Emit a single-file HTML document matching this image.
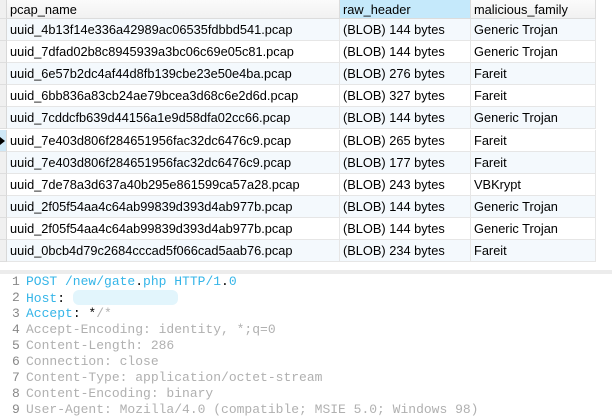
<!DOCTYPE html>
<html><head><style>
body{margin:0;width:612px;height:416px;background:#fff;overflow:hidden;position:relative;font-family:"Liberation Sans","Noto Sans CJK SC",sans-serif;font-size:12.8px;color:#000}
.c{position:absolute;box-sizing:border-box;padding-left:3px;line-height:22px;white-space:nowrap;border-right:1px solid #e6e6e6;border-bottom:1px solid #e6e6e6}
.h{line-height:19px;background:linear-gradient(#fbfbfb,#f1f1f1);border-color:#dcdcdc}
.g{position:absolute;left:0;width:7px;box-sizing:border-box;background:#f0f0f0;border-right:1px solid #d8d8d8;border-bottom:1px solid #dedede}
.code{position:absolute;left:0;top:274px;width:612px;font-family:"Liberation Mono",monospace;font-size:13px;color:#b0b0b0}
.ln{position:absolute;left:12px;color:#888;font-size:13px}
.l{position:absolute;left:26px;white-space:pre}
.b{color:#35b5e8}
</style></head><body>
<div id="t"></div>
<div style="position:absolute;top:270px;left:0;width:612px;height:4px;background:#ececec"></div>
<div class="code" id="code"></div>
<script>
var rows=[["uuid_4b13f14e336a42989ac06535fdbbd541.pcap","144","Generic Trojan"],["uuid_7dfad02b8c8945939a3bc06c69e05c81.pcap","144","Generic Trojan"],["uuid_6e57b2dc4af44d8fb139cbe23e50e4ba.pcap","276","Fareit"],["uuid_6bb836a83cb24ae79bcea3d68c6e2d6d.pcap","327","Fareit"],["uuid_7cddcfb639d44156a1e9d58dfa02cc66.pcap","144","Generic Trojan"],["uuid_7e403d806f284651956fac32dc6476c9.pcap","265","Fareit"],["uuid_7e403d806f284651956fac32dc6476c9.pcap","177","Fareit"],["uuid_7de78a3d637a40b295e861599ca57a28.pcap","243","VBKrypt"],["uuid_2f05f54aa4c64ab99839d393d4ab977b.pcap","144","Generic Trojan"],["uuid_2f05f54aa4c64ab99839d393d4ab977b.pcap","144","Generic Trojan"],["uuid_0bcb4d79c2684cccad5f066cad5aab76.pcap","234","Fareit"]];
var h='<div class="g" style="top:0;height:19px"></div>';
h+='<div class="c h" style="top:0;left:7px;width:333px;height:19px">pcap_name</div>';
h+='<div class="c h" style="top:0;left:340px;width:131px;height:19px;background:#c5e9fb">raw_header</div>';
h+='<div class="c h" style="top:0;left:471px;width:125px;height:19px">malicious_family</div>';
rows.forEach(function(r,i){var y=19+i*22.1;var bg=i%2==0?'#f4f9fd':'#fff';
h+='<div class="g" style="top:'+y+'px;height:22px;'+(i==5?'background:#cfe8f7':'')+'">'+(i==5?'<div style="position:absolute;left:0;top:7px;border-left:5px solid #000;border-top:4px solid transparent;border-bottom:4px solid transparent"></div>':'')+'</div>';
h+='<div class="c" style="top:'+y+'px;left:7px;width:333px;height:22px;background:'+bg+'">'+r[0]+'</div>';
h+='<div class="c" style="top:'+y+'px;left:340px;width:131px;height:22px;background:'+bg+'">(BLOB) '+r[1]+' bytes</div>';
h+='<div class="c" style="top:'+y+'px;left:471px;width:125px;height:22px;background:'+bg+'">'+r[2]+'</div>';});
document.getElementById('t').innerHTML=h;
var L=['<span class="b">POST /new/gate</span><span style="color:#000">.</span><span class="b">php HTTP/1</span><span style="color:#000">.</span><span class="b">0</span>',
'<span class="b">Host</span><span style="color:#000">:</span> <span style="display:inline-block;width:105px;height:15px;vertical-align:-3px;background:#e2f5fc;border-radius:6px"></span>',
'<span class="b">Accept</span><span style="color:#000">: *</span>/*',
'Accept-Encoding: identity, *;q=0','Content-Length: 286','Connection: close','Content-Type: application/octet-stream','Content-Encoding: binary','User-Agent: Mozilla/4.0 (compatible; MSIE 5.0; Windows 98)'];
var c='';L.forEach(function(s,i){var y=i*16;c+='<div class="ln" style="top:'+y+'px">'+(i+1)+'</div><div class="l" style="top:'+y+'px">'+s+'</div>';});
document.getElementById('code').innerHTML=c;
</script>
</body></html>
